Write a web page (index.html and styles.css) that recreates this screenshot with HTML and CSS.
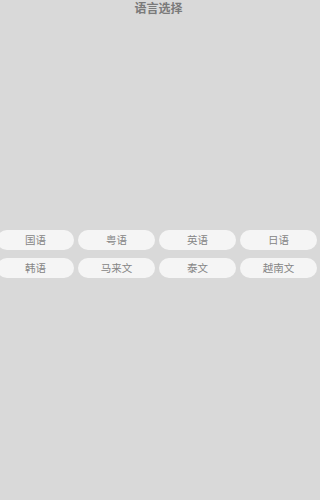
FILE: index.html
```html
<!DOCTYPE html>
<html lang="zh">
<head>
<meta charset="utf-8">
<link rel="stylesheet" href="styles.css">
</head>
<body>
<div class="screen">
  <div class="title">语言选择</div>
  <div class="grid">
    <div class="btn">国语</div>
    <div class="btn">粤语</div>
    <div class="btn">英语</div>
    <div class="btn">日语</div>
    <div class="btn">韩语</div>
    <div class="btn">马来文</div>
    <div class="btn">泰文</div>
    <div class="btn">越南文</div>
  </div>
</div>
</body>
</html>
```
FILE: styles.css
```css
html, body {
  margin: 0;
  padding: 0;
  background: #d9d9d9;
  overflow: hidden;
}
.screen {
  width: 317px;
  height: 500px;
  font-family: "Noto Sans CJK SC", "Noto Sans", sans-serif;
}
.title {
  height: 16px;
  line-height: 16px;
  text-align: center;
  font-size: 12px;
  font-weight: bold;
  color: #7a7a7a;
}
.grid {
  margin-top: 214px;
  margin-left: -3px;
  width: 320px;
  display: grid;
  grid-template-columns: repeat(4, 77px);
  column-gap: 4px;
  row-gap: 8px;
}
.btn {
  height: 20px;
  border-radius: 10px;
  background: #f5f5f5;
  color: #858585;
  font-size: 10.5px;
  line-height: 20px;
  text-align: center;
}
```
